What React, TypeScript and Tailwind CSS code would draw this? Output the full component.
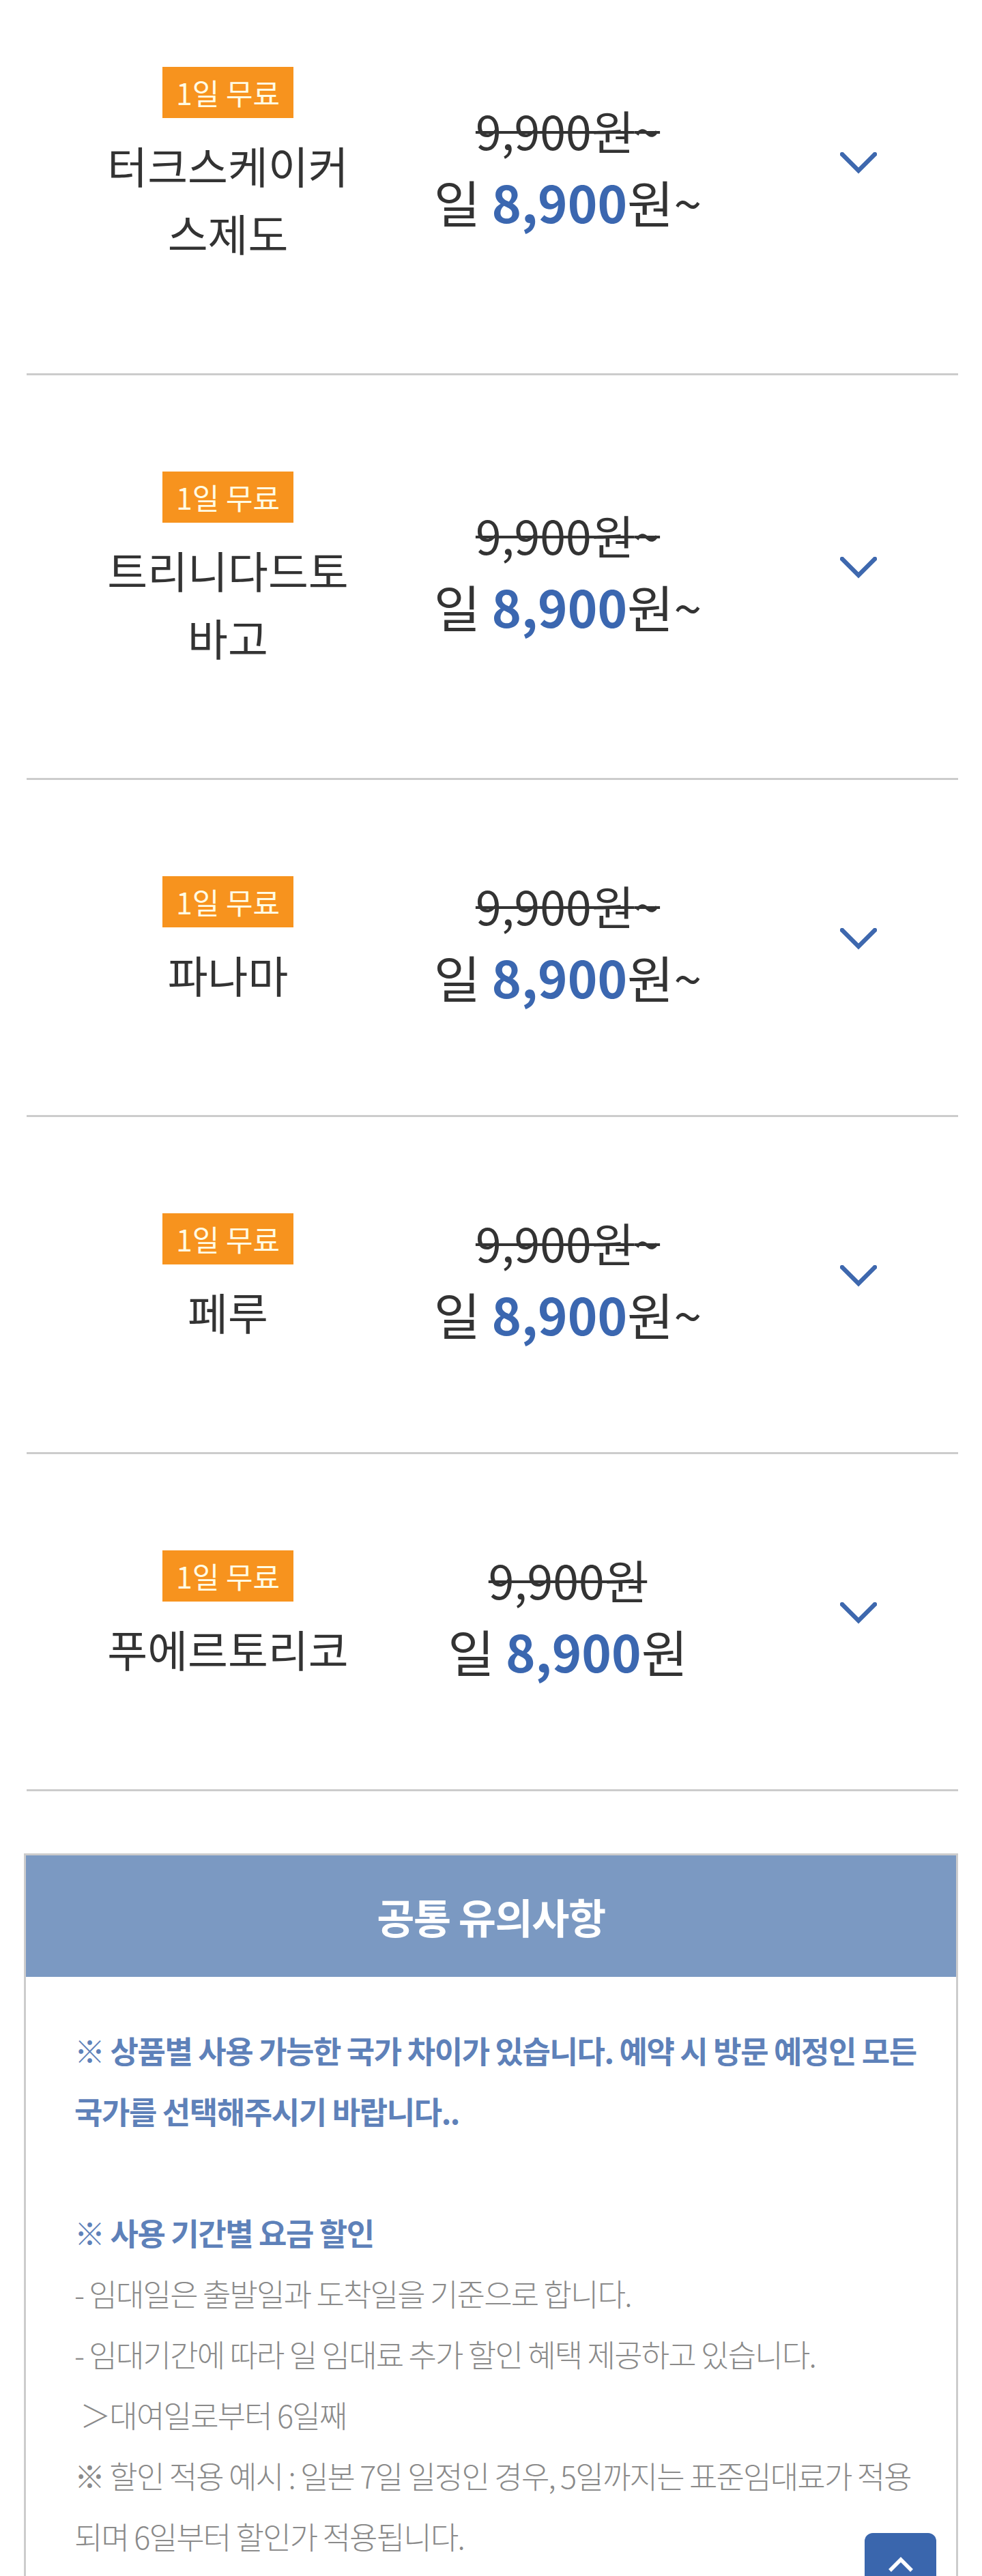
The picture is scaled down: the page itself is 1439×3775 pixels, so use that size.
import React from "react";

type Row = { lines: string[]; tilde: boolean; first?: boolean };

const rows: Row[] = [
  { lines: ["터크스케이커", "스제도"], tilde: true, first: true },
  { lines: ["트리니다드토", "바고"], tilde: true },
  { lines: ["파나마"], tilde: true },
  { lines: ["페루"], tilde: true },
  { lines: ["푸에르토리코"], tilde: false },
];

function ChevronDown() {
  return (
    <svg width="54" height="32" viewBox="0 0 54 32" fill="none">
      <path d="M3 3 L27 27 L51 3" stroke="#3e68ae" strokeWidth="6.5" strokeLinecap="round" strokeLinejoin="miter" />
    </svg>
  );
}

function CountryRow({ row }: { row: Row }) {
  return (
    <div
      className={`flex items-stretch border-b-[3px] border-[#cccccc] pb-[157px] ${row.first ? "pt-[98px]" : "pt-[141px]"}`}
    >
      <div className="flex w-[590px] flex-col items-center">
        <div className="flex h-[75px] items-center bg-[#f7931e] px-[20px] text-[43px] leading-none text-[#fffbe3]">
          1일 무료
        </div>
        <div className="mt-[19px] text-center text-[64px] leading-[99px] text-[#333333]">
          {row.lines.map((l, i) => (
            <div key={i}>{l}</div>
          ))}
        </div>
      </div>
      <div className="-mb-[3px] -mt-[14px] flex w-[406px] flex-col items-center justify-center text-[#333333]">
        <div className="h-[112px] shrink-0 whitespace-nowrap text-[68px] leading-[112px] line-through decoration-[4px] decoration-[#333333]">
          9,900원{row.tilde ? "~" : ""}
        </div>
        <div className="h-[96px] shrink-0 whitespace-nowrap text-[74px] leading-[96px]">
          일 <span className="font-bold text-[#3b67b0]">8,900</span>원{row.tilde ? "~" : ""}
        </div>
      </div>
      <div className="flex flex-1 items-center pl-[196px]">
        <div className="mb-[10px]">
          <ChevronDown />
        </div>
      </div>
    </div>
  );
}

export default function App() {
  return (
    <div className="relative h-[3775px] overflow-hidden bg-white font-['Noto_Sans_CJK_KR','Noto_Sans',sans-serif]">
      <div className="pl-[39px] pr-[35px]">
        {rows.map((r, i) => (
          <CountryRow key={i} row={r} />
        ))}
      </div>

      <div className="mx-[35px] mt-[91px] border-[3px] border-[#cccccc]">
        <div className="flex h-[178px] items-center justify-center bg-[#7b99c2]">
          <span className="text-[60px] font-bold tracking-[-1.5px] text-white">공통 유의사항</span>
        </div>
        <div className="pl-[71px] pr-[30px] pt-[63px] pb-[80px] text-[45px] leading-[89px]">
          <div className="font-bold tracking-[-1.4px] text-[#5e81b9]">
            <div className="whitespace-nowrap">※ 상품별 사용 가능한 국가 차이가 있습니다. 예약 시 방문 예정인 모든</div>
            <div>국가를 선택해주시기 바랍니다..</div>
          </div>
          <div className="h-[89px]" />
          <div className="font-bold tracking-[-1.4px] text-[#5e81b9]">※ 사용 기간별 요금 할인</div>
          <div className="font-light tracking-[-1.8px] text-[#8a8a8a]">
            <div>- 임대일은 출발일과 도착일을 기준으로 합니다.</div>
            <div>- 임대기간에 따라 일 임대료 추가 할인 혜택 제공하고 있습니다.</div>
            <div>&nbsp;＞대여일로부터 6일째</div>
            <div className="whitespace-nowrap">※ 할인 적용 예시 : 일본 7일 일정인 경우, 5일까지는 표준임대료가 적용</div>
            <div>되며 6일부터 할인가 적용됩니다.</div>
          </div>
        </div>
      </div>

      <button className="absolute left-[1267px] top-[3712px] flex h-[105px] w-[105px] items-start justify-center rounded-[12px] bg-[#3a66ad] pt-[34px]">
        <svg width="38" height="24" viewBox="0 0 38 24" fill="none">
          <path d="M3 21 L19 5 L35 21" stroke="#ffffff" strokeWidth="5.5" />
        </svg>
      </button>
    </div>
  );
}
